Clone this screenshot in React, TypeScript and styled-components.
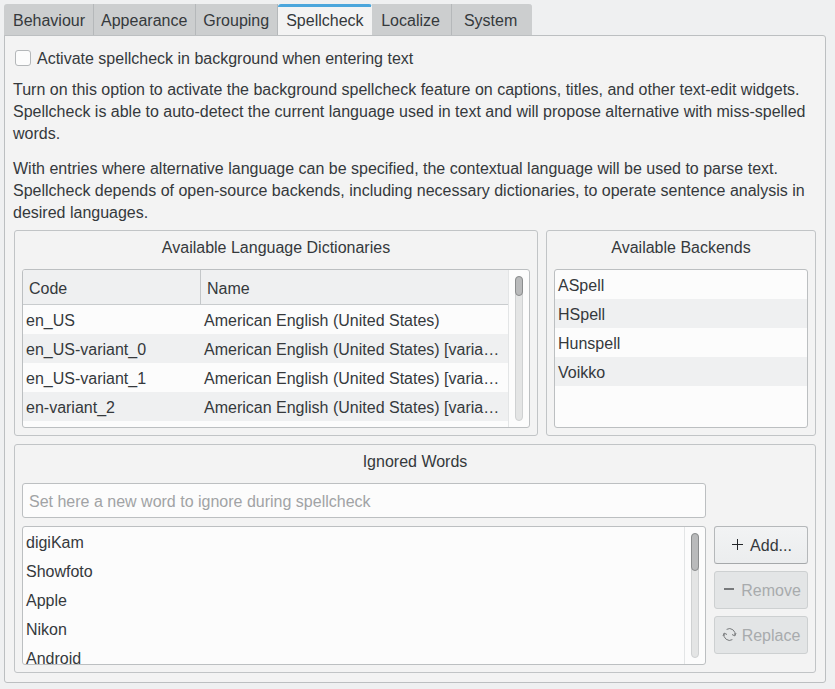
import React, { useState } from "react";
import styled, { createGlobalStyle } from "styled-components";

const GlobalStyle = createGlobalStyle`
  *, *::before, *::after { box-sizing: border-box; }
  body {
    margin: 0;
    background: #eff0f1;
    color: #35393c;
    font: 16px/22px "Liberation Sans", Arial, sans-serif;
  }
  button, input { font: inherit; color: inherit; }
`;

const Page = styled.main`
  min-height: 100vh;
  padding: 4px 9px 6px 4px;
  display: flex;
  flex-direction: column;
`;

const TabBar = styled.div`
  display: flex;
  height: 32px;
  margin-bottom: -1px;
  border-radius: 3px 3px 0 0;
`;

const Tab = styled.button<{ $active: boolean }>`
  min-width: 80px;
  padding: ${(p) => (p.$active ? "0 7px 1px 8px" : "2px 8px 0 7px")};
  border: 0;
  border-top: ${(p) => (p.$active ? "3px solid #4ba6dc" : "0")};
  border-right: 1px solid ${(p) => (p.$active ? "#f3f3f3" : "#b5b8ba")};
  border-bottom: 1px solid ${(p) => (p.$active ? "#f3f3f3" : "#b9bcbe")};
  border-radius: ${(p) => (p.$active ? "3px 3px 0 0" : "0")};
  background: ${(p) => (p.$active ? "#f3f3f3" : "#cccecf")};
  white-space: nowrap;

  &:first-child { padding-left: 9px; border-top-left-radius: 3px; }
  &:last-child { border-top-right-radius: 3px; border-right-color: #cccecf; }
`;

const Panel = styled.section`
  flex: 1;
  padding: 11px 9px 9px 8px;
  border: 1px solid #bcbfc1;
  border-radius: 0 3px 3px 3px;
  background: #f3f3f3;
  display: flex;
  flex-direction: column;
`;

const CheckRow = styled.label`
  display: flex;
  align-items: center;
  gap: 6px;
  height: 24px;
  margin-bottom: 8px;
`;

const CheckBox = styled.input`
  appearance: none;
  width: 16px;
  height: 16px;
  margin: 0 0 2px 2px;
  border: 1px solid #b4b7b9;
  border-radius: 3px;
  background: #fcfcfc;
  &:checked { background: #3daee9; }
`;

const Help = styled.p`
  margin: 0 0 13px;
  &:last-of-type { margin-bottom: 6px; }
`;

const Groups = styled.div`
  display: grid;
  grid-template-columns: minmax(0, 524fr) minmax(0, 270fr);
  gap: 8px;
  margin-left: 1px;
`;

const Group = styled.section<{ $wide?: boolean }>`
  grid-column: ${(p) => (p.$wide ? "1 / -1" : "auto")};
  padding: 6px 7px 7px;
  border: 1px solid #c1c4c6;
  border-radius: 3px;
`;

const GroupTitle = styled.h2`
  margin: 0 0 10px;
  font-size: 16px;
  font-weight: 400;
  line-height: 22px;
  text-align: center;
`;

const View = styled.div<{ $height: number }>`
  display: flex;
  grid-column: 1;
  height: ${(p) => p.$height}px;
  border: 1px solid #bcbfc1;
  border-radius: 3px;
  background: #fcfcfc;
  overflow: hidden;
`;

const ViewContent = styled.div`
  flex: 1;
  min-width: 0;
  overflow: hidden;
`;

const ScrollGutter = styled.div`
  width: 21px;
  padding: 6px;
  border-left: 1px solid #e3e5e6;
  display: flex;
`;

const ScrollTrack = styled.div`
  flex: 1;
  border: 1px solid #cfd1d2;
  border-radius: 4px;
  background: #e4e5e5;
`;

const ScrollThumb = styled.div<{ $size: number }>`
  height: ${(p) => p.$size}px;
  margin: -1px;
  border: 1px solid #8b8d8e;
  border-radius: 4px;
  background: #b9babb;
`;

const Table = styled.table`
  width: 100%;
  table-layout: fixed;
  border-collapse: separate;
  border-spacing: 0;
  text-align: left;
`;

const HeadCell = styled.th<{ $first?: boolean }>`
  width: ${(p) => (p.$first ? "178px" : "auto")};
  height: 35px;
  padding: 3px 6px 0;
  border-right: ${(p) => (p.$first ? "1px solid #c4c7c9" : "0")};
  border-bottom: 1px solid #c9ccce;
  background: #eff0f1;
  font-weight: 400;
`;

const BodyRow = styled.tr`
  &:nth-child(even) { background: #eff0f1; }
`;

const Cell = styled.td`
  height: 29px;
  padding: 2px 3px 0;
  overflow: hidden;
  text-overflow: ellipsis;
  white-space: nowrap;
`;

const List = styled.ul`
  margin: 0;
  padding: 0;
  list-style: none;
`;

const Item = styled.li<{ $striped?: boolean }>`
  height: 29px;
  padding: 0 3px;
  line-height: 31px;
  &:nth-child(even) { background: ${(p) => (p.$striped ? "#eff0f1" : "transparent")}; }
`;

const WordGrid = styled.div`
  display: grid;
  grid-template-columns: minmax(0, 1fr) 94px;
  gap: 8px;
`;

const WordInput = styled.input`
  grid-column: 1;
  width: 100%;
  height: 35px;
  padding: 2px 6px 0;
  border: 1px solid #bcbfc1;
  border-radius: 3px;
  background: #fcfcfc;
  &::placeholder { color: #a1a3a5; opacity: 1; }
`;

const Actions = styled.div`
  grid-column: 2;
  display: flex;
  flex-direction: column;
  gap: 7px;
`;

const Action = styled.button`
  display: flex;
  align-items: center;
  justify-content: center;
  gap: 4px;
  height: 38px;
  padding: 1px 0 0;
  border: 1px solid #b5b8ba;
  border-bottom-color: #a5a8aa;
  border-radius: 3px;
  background: linear-gradient(#f2f3f4, #ebedee);
  svg { flex: none; }
  &:disabled {
    border-color: #cdd0d1;
    background: #e3e5e6;
    color: #a8abad;
  }
`;

const icons = {
  add: (
    <svg width="16" height="16" viewBox="0 0 16 16" fill="none" stroke="#232629" aria-hidden="true">
      <path d="M2 6.5h11M7.5 1v11" />
    </svg>
  ),
  remove: (
    <svg width="16" height="16" viewBox="0 0 16 16" fill="none" stroke="#77797b" strokeWidth="2" aria-hidden="true">
      <path d="M3 6h10" />
    </svg>
  ),
  replace: (
    <svg width="16" height="16" viewBox="0 0 16 16" fill="none" stroke="#77797b" aria-hidden="true">
      <path d="M4.6 1.4A5.6 5.6 0 0 1 12.9 7.6M10 6.5l2.8 1.4L14 5" />
      <path d="M10.4 11.6A5.6 5.6 0 0 1 2.1 5.4M5 6.5L2.2 5.1L1 8" />
    </svg>
  ),
};

const tabs = ["Behaviour", "Appearance", "Grouping", "Spellcheck", "Localize", "System"];

const dictionaries = [
  ["en_US", "American English (United States)"],
  ["en_US-variant_0", "American English (United States) [variant 0]"],
  ["en_US-variant_1", "American English (United States) [variant 1]"],
  ["en-variant_2", "American English (United States) [variant 2]"],
];

const backends = ["ASpell", "HSpell", "Hunspell", "Voikko"];
const ignoredWords = ["digiKam", "Showfoto", "Apple", "Nikon", "Android"];

function ScrollBar({ thumb }: { thumb: number }) {
  return (
    <ScrollGutter>
      <ScrollTrack>
        <ScrollThumb $size={thumb} />
      </ScrollTrack>
    </ScrollGutter>
  );
}

export default function App() {
  const [active, setActive] = useState("Spellcheck");
  const [enabled, setEnabled] = useState(false);
  const [word, setWord] = useState("");

  return (
    <Page>
      <GlobalStyle />
      <TabBar role="tablist">
        {tabs.map((name) => (
          <Tab
            key={name}
            role="tab"
            aria-selected={name === active}
            $active={name === active}
            onClick={() => setActive(name)}
          >
            {name}
          </Tab>
        ))}
      </TabBar>
      <Panel role="tabpanel">
        <CheckRow>
          <CheckBox type="checkbox" checked={enabled} onChange={(e) => setEnabled(e.target.checked)} />
          Activate spellcheck in background when entering text
        </CheckRow>
        <Help>
          Turn on this option to activate the background spellcheck feature on captions, titles, and other
          text-edit widgets. Spellcheck is able to auto-detect the current language used in text and will
          propose alternative with miss-spelled words.
        </Help>
        <Help>
          With entries where alternative language can be specified, the contextual language will be used to
          parse text. Spellcheck depends of open-source backends, including necessary dictionaries, to
          operate sentence analysis in desired languages.
        </Help>
        <Groups>
          <Group>
            <GroupTitle>Available Language Dictionaries</GroupTitle>
            <View $height={159}>
              <ViewContent>
                <Table>
                  <thead>
                    <tr>
                      <HeadCell $first>Code</HeadCell>
                      <HeadCell>Name</HeadCell>
                    </tr>
                  </thead>
                  <tbody>
                    {dictionaries.map(([code, name]) => (
                      <BodyRow key={code}>
                        <Cell>{code}</Cell>
                        <Cell>{name}</Cell>
                      </BodyRow>
                    ))}
                  </tbody>
                </Table>
              </ViewContent>
              <ScrollBar thumb={20} />
            </View>
          </Group>
          <Group>
            <GroupTitle>Available Backends</GroupTitle>
            <View $height={159}>
              <ViewContent>
                <List>
                  {backends.map((name) => (
                    <Item key={name} $striped>{name}</Item>
                  ))}
                </List>
              </ViewContent>
            </View>
          </Group>
          <Group $wide>
            <GroupTitle>Ignored Words</GroupTitle>
            <WordGrid>
              <WordInput
                aria-label="Word to ignore"
                placeholder="Set here a new word to ignore during spellcheck"
                value={word}
                onChange={(e) => setWord(e.target.value)}
              />
              <View $height={139}>
                <ViewContent>
                  <List>
                    {ignoredWords.map((name) => (
                      <Item key={name}>{name}</Item>
                    ))}
                  </List>
                </ViewContent>
                <ScrollBar thumb={38} />
              </View>
              <Actions>
                <Action>{icons.add}Add...</Action>
                <Action disabled>{icons.remove}Remove</Action>
                <Action disabled>{icons.replace}Replace</Action>
              </Actions>
            </WordGrid>
          </Group>
        </Groups>
      </Panel>
    </Page>
  );
}
